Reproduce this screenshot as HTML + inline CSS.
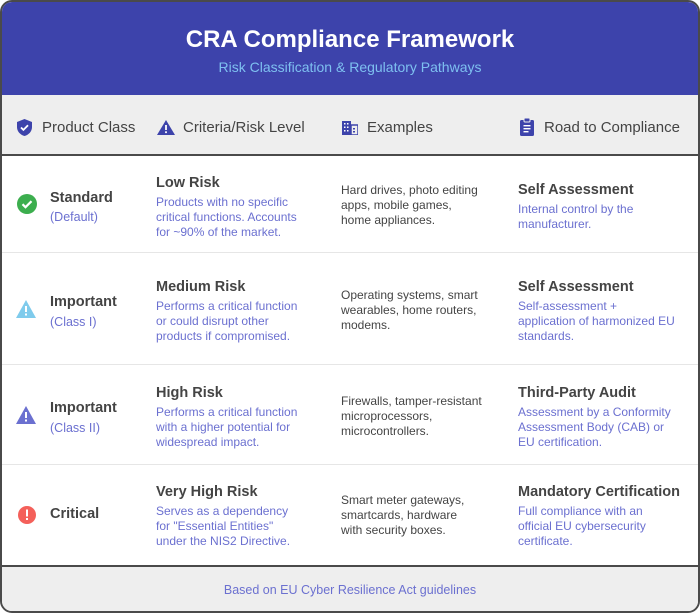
<!DOCTYPE html>
<html><head><meta charset="utf-8"><style>
*{margin:0;padding:0;box-sizing:border-box}
body{width:700px;height:613px;background:#fff;font-family:"Liberation Sans",sans-serif;position:relative;overflow:hidden}
.frame{position:absolute;left:0;top:0;width:700px;height:613px;border:2px solid #4a4a4a;border-radius:12px;overflow:hidden;background:#fff}
.in{position:absolute;left:-2px;top:-2px;width:700px;height:613px}
.hdr{position:absolute;left:0;top:0;width:700px;height:95px;background:#3d43ab}
.t{position:absolute;white-space:nowrap}
.title{left:0;width:700px;text-align:center;top:26px;color:#fff;font-size:24px;font-weight:bold}
.sub{left:0;width:700px;text-align:center;top:59px;color:#7ec0f0;font-size:14px}
.th{position:absolute;left:0;top:95px;width:700px;height:61px;background:#eeeeee;border-bottom:2px solid #4a4a4a}
.hl{font-size:15px;color:#444;top:24px}
.row{position:absolute;left:0;width:700px;border-bottom:1px solid #e6e6e6}
.cls{font-size:14.5px;font-weight:bold;color:#444}
.cl2{font-size:12.5px;color:#6b70d0}
.rk{font-size:14.5px;font-weight:bold;color:#444}
.ds{font-size:12px;color:#6b70d0;line-height:15px}
.ex{font-size:12px;color:#444;line-height:15px}
.foot{position:absolute;left:0;top:565px;width:700px;height:48px;background:#eeeeee;border-top:2px solid #4a4a4a;text-align:center;font-size:12.5px;color:#6b70d0;padding-top:16px}
</style></head><body>
<div class="frame"><div class="in">
<div class="hdr">
<div class="t title">CRA Compliance Framework</div>
<div class="t sub">Risk Classification &amp; Regulatory Pathways</div>
</div>
<div class="th">
<svg style="position:absolute;left:17px;top:24px" width="15" height="17" viewBox="0 0 15 17"><path d="M7.5 0L15 3v5c0 4.5-3.2 7.8-7.5 9C3.2 15.8 0 12.5 0 8V3z" fill="#3d43ab"/><path d="M4 8.5l2.4 2.4L11 6.3" stroke="#fff" stroke-width="1.8" fill="none"/></svg>
<div class="t hl" style="left:42px">Product Class</div>
<svg style="position:absolute;left:157px;top:25px" width="18" height="15" viewBox="0 0 18 15"><path d="M9 0L18 15H0z" fill="#3d43ab"/><rect x="8.1" y="5" width="1.8" height="5" fill="#fff"/><rect x="8.1" y="11.3" width="1.8" height="1.8" fill="#fff"/></svg>
<div class="t hl" style="left:183px">Criteria/Risk Level</div>
<svg style="position:absolute;left:342px;top:26px" width="16" height="14" viewBox="0 0 16 14"><rect x="0" y="0" width="9" height="14" fill="#3d43ab"/><rect x="9" y="4" width="7" height="10" fill="none" stroke="#3d43ab" stroke-width="1.5"/><g fill="#fff"><rect x="2" y="2" width="1.5" height="1.5"/><rect x="5" y="2" width="1.5" height="1.5"/><rect x="2" y="5.5" width="1.5" height="1.5"/><rect x="5" y="5.5" width="1.5" height="1.5"/><rect x="2" y="9" width="1.5" height="1.5"/><rect x="5" y="9" width="1.5" height="1.5"/></g><rect x="11" y="7" width="2" height="1.5" fill="#3d43ab"/><rect x="11" y="10" width="2" height="1.5" fill="#3d43ab"/></svg>
<div class="t hl" style="left:367px">Examples</div>
<svg style="position:absolute;left:520px;top:23px" width="14" height="18" viewBox="0 0 14 18"><rect x="0" y="2" width="14" height="16" rx="1.5" fill="#3d43ab"/><rect x="4" y="0" width="6" height="4" rx="1" fill="#3d43ab" stroke="#eee" stroke-width="1"/><g fill="#fff"><rect x="3.5" y="7" width="7" height="1.4"/><rect x="3.5" y="10" width="7" height="1.4"/><rect x="3.5" y="13" width="5" height="1.4"/></g></svg>
<div class="t hl" style="left:544px">Road to Compliance</div>
</div>

<div class="row" style="top:157px;height:96px">
<svg style="position:absolute;left:17px;top:37px" width="20" height="20"><circle cx="10" cy="10" r="10" fill="#3cae4e"/><path d="M5.5 10.2l3 3 6-6" stroke="#fff" stroke-width="2.2" fill="none"/></svg>
<div class="t cls" style="left:50px;top:33px">Standard</div>
<div class="t cl2" style="left:50px;top:53px">(Default)</div>
<div class="t rk" style="left:156px;top:18px">Low Risk</div>
<div class="t ds" style="left:156px;top:38px">Products with no specific<br>critical functions. Accounts<br>for ~90% of the market.</div>
<div class="t ex" style="left:341px;top:26px">Hard drives, photo editing<br>apps, mobile games,<br>home appliances.</div>
<div class="t rk" style="left:518px;top:25px">Self Assessment</div>
<div class="t ds" style="left:518px;top:45px">Internal control by the<br>manufacturer.</div>
</div>

<div class="row" style="top:253px;height:112px">
<svg style="position:absolute;left:16px;top:47px" width="20" height="18" viewBox="0 0 20 18"><path d="M10 0L20 18H0z" fill="#7fcbec"/><rect x="9" y="6" width="2" height="6" fill="#fff"/><rect x="9" y="13.5" width="2" height="2" fill="#fff"/></svg>
<div class="t cls" style="left:50px;top:41px">Important</div>
<div class="t cl2" style="left:50px;top:62px">(Class I)</div>
<div class="t rk" style="left:156px;top:26px">Medium Risk</div>
<div class="t ds" style="left:156px;top:46px">Performs a critical function<br>or could disrupt other<br>products if compromised.</div>
<div class="t ex" style="left:341px;top:35px">Operating systems, smart<br>wearables, home routers,<br>modems.</div>
<div class="t rk" style="left:518px;top:26px">Self Assessment</div>
<div class="t ds" style="left:518px;top:46px">Self-assessment +<br>application of harmonized EU<br>standards.</div>
</div>

<div class="row" style="top:365px;height:100px">
<svg style="position:absolute;left:16px;top:41px" width="20" height="18" viewBox="0 0 20 18"><path d="M10 0L20 18H0z" fill="#6b70d0"/><rect x="9" y="6" width="2" height="6" fill="#fff"/><rect x="9" y="13.5" width="2" height="2" fill="#fff"/></svg>
<div class="t cls" style="left:50px;top:35px">Important</div>
<div class="t cl2" style="left:50px;top:56px">(Class II)</div>
<div class="t rk" style="left:156px;top:20px">High Risk</div>
<div class="t ds" style="left:156px;top:40px">Performs a critical function<br>with a higher potential for<br>widespread impact.</div>
<div class="t ex" style="left:341px;top:29px">Firewalls, tamper-resistant<br>microprocessors,<br>microcontrollers.</div>
<div class="t rk" style="left:518px;top:20px">Third-Party Audit</div>
<div class="t ds" style="left:518px;top:40px">Assessment by a Conformity<br>Assessment Body (CAB) or<br>EU certification.</div>
</div>

<div class="row" style="top:465px;height:100px;border-bottom:none">
<svg style="position:absolute;left:17px;top:40px" width="20" height="20"><circle cx="10" cy="10" r="9" fill="#f4605a"/><rect x="9" y="4.5" width="2" height="7" fill="#fff"/><rect x="9" y="13" width="2" height="2" fill="#fff"/></svg>
<div class="t cls" style="left:50px;top:41px">Critical</div>
<div class="t rk" style="left:156px;top:19px">Very High Risk</div>
<div class="t ds" style="left:156px;top:39px">Serves as a dependency<br>for "Essential Entities"<br>under the NIS2 Directive.</div>
<div class="t ex" style="left:341px;top:28px">Smart meter gateways,<br>smartcards, hardware<br>with security boxes.</div>
<div class="t rk" style="left:518px;top:19px">Mandatory Certification</div>
<div class="t ds" style="left:518px;top:39px">Full compliance with an<br>official EU cybersecurity<br>certificate.</div>
</div>

<div class="foot">Based on EU Cyber Resilience Act guidelines</div>
</div></div>
</body></html>
